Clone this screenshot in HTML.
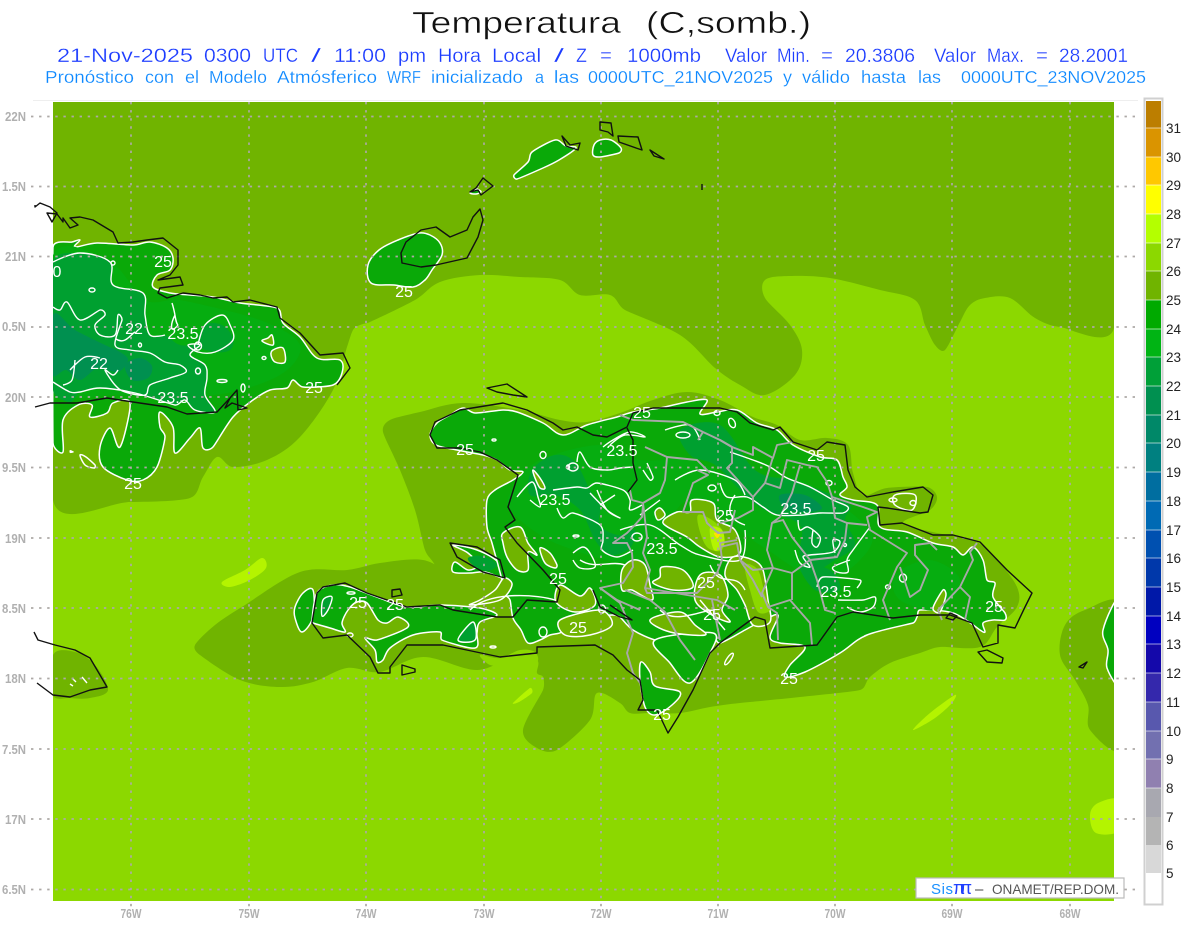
<!DOCTYPE html>
<html><head><meta charset="utf-8"><title>Temperatura</title>
<style>
html,body{margin:0;padding:0;background:#fff}
svg{display:block}
text{font-family:"Liberation Sans",sans-serif;white-space:pre}
.t1 text{font-size:31px;fill:#111;stroke:#fff;stroke-width:.5px}
.t2 text{font-size:19px;fill:#1c3cff;stroke:#fff;stroke-width:.25px}
.t3 text{font-size:17.5px;fill:#0c88ff;stroke:#fff;stroke-width:.2px}
.l{fill:#fff;font-size:16px;text-anchor:middle}
.ax{fill:#b0b0b0;font-size:13px;font-weight:bold}
.cb{fill:#222;font-size:13.5px}
.g{fill:#0aa908;stroke:#fff;stroke-width:1.5;stroke-linejoin:round}
.o{fill:#70b400;stroke:#fff;stroke-width:1.5;stroke-linejoin:round}
.d{fill:#00a030;stroke:none}
.e{fill:#009050;stroke:none}
.m{fill:#06ad10;stroke:none}
.w{fill:none;stroke:#fff;stroke-width:1.4;stroke-linejoin:round}
.c{fill:none;stroke:#111;stroke-width:1.4;stroke-linejoin:round}
.b{fill:none;stroke:#a8a8a8;stroke-width:1.9;stroke-linejoin:round}
</style></head><body>
<svg width="1200" height="927" viewBox="0 0 1200 927" xmlns="http://www.w3.org/2000/svg">
<rect width="1200" height="927" fill="#fff"/>
<line x1="33" x2="1138" y1="100.5" y2="100.5" stroke="#eee"/>
<g class="t1">
<text x="412" y="33" textLength="209" lengthAdjust="spacing">Temperatura</text>
<text x="646" y="33" textLength="165" lengthAdjust="spacing">(C,somb.)</text>
</g>
<g class="t2">
<text x="57" y="62" textLength="136">21-Nov-2025</text><text x="204" y="62" textLength="47">0300</text><text x="263" y="62" textLength="35">UTC</text><text x="311" y="62" textLength="10">/</text><text x="334" y="62" textLength="52">11:00</text><text x="398" y="62" textLength="28">pm</text><text x="438" y="62" textLength="43">Hora</text><text x="492" y="62" textLength="49">Local</text><text x="554" y="62" textLength="10">/</text><text x="576" y="62" textLength="11">Z</text><text x="600" y="62" textLength="12">=</text><text x="627" y="62" textLength="74">1000mb</text><text x="725" y="62" textLength="42">Valor</text><text x="777" y="62" textLength="33">Min.</text><text x="821" y="62" textLength="12">=</text><text x="845" y="62" textLength="70">20.3806</text><text x="934" y="62" textLength="42">Valor</text><text x="987" y="62" textLength="37">Max.</text><text x="1036" y="62" textLength="12">=</text><text x="1059" y="62" textLength="69">28.2001</text>
</g>
<g class="t3">
<text x="45" y="83" textLength="89">Pronóstico</text><text x="145" y="83" textLength="29">con</text><text x="185" y="83" textLength="14">el</text><text x="209" y="83" textLength="58">Modelo</text><text x="277" y="83" textLength="100">Atmósferico</text><text x="387" y="83" textLength="34">WRF</text><text x="431" y="83" textLength="92">inicializado</text><text x="535" y="83" textLength="9">a</text><text x="554" y="83" textLength="25">las</text><text x="588" y="83" textLength="185">0000UTC_21NOV2025</text><text x="783" y="83" textLength="9">y</text><text x="802" y="83" textLength="48">válido</text><text x="861" y="83" textLength="45">hasta</text><text x="918" y="83" textLength="23">las</text><text x="961" y="83" textLength="185">0000UTC_23NOV2025</text>
</g>

<clipPath id="mp"><rect x="53" y="102" width="1061" height="799"/></clipPath>
<g clip-path="url(#mp)">
<rect x="53" y="102" width="1061" height="799" fill="#8cd800"/>
<!-- upper olive -->
<polygon fill="#70b400" points="53,102 1114,102 1114,328 1060,327 1035,318 1010,298 985,298 970,305 960,322 945,350 935,345 925,325 915,300 880,290 830,278 790,276 765,280 765,298 790,325 802,350 795,375 765,395 740,385 715,368 680,335 625,310 610,295 580,295 560,280 520,277 480,275 440,282 415,300 370,322 360,325 353,330 347,347 333,390 300,437 267,460 233,467 217,457 203,477 190,498 130,502 53,500"/>
<!-- Hispaniola halo -->
<polygon fill="#70b400" points="383,432 390,420 420,412 463,403 520,410 560,420 587,422 620,413 653,400 687,392 720,400 753,417 777,425 800,440 827,438 848,445 853,473 863,495 887,488 927,487 937,497 930,510 903,523 937,533 973,540 997,560 1017,587 1017,607 997,627 980,647 940,647 920,653 890,663 870,677 860,690 800,697 740,703 710,707 680,713 650,713 630,713 620,703 597,693 590,720 557,750 537,748 523,730 543,690 543,677 537,673 537,660 515,655 477,670 423,657 380,672 347,668 313,682 280,687 240,680 200,655 195,645 215,625 245,605 300,572 347,570 380,563 423,560 447,575 450,595 435,565 425,550 415,510 400,470"/>
<polygon fill="#8cd800" points="480,655 500,658 520,650 535,652 537,662 520,662 505,665 490,665"/>
<!-- right olive -->
<polygon fill="#70b400" points="1120,605 1085,610 1065,625 1060,655 1075,680 1088,705 1090,730 1120,747"/>
<polygon class="g" points="1120,600 1103,630 1108,650 1107,668 1120,684"/>
<!-- Jamaica olive -->
<polygon fill="#70b400" points="53,655 75,652 95,665 108,690 90,698 70,698 53,695"/>
<path class="w" d="M72 678l4 4M82 677l5 6M70 684l3 2"/>
<!-- lime-yellow patches -->
<polygon fill="#b4f400" points="222,582 245,570 262,558 266,568 250,580 230,587"/>
<polygon fill="#b4f400" points="1120,800 1098,803 1090,815 1096,833 1120,830"/>
<polygon fill="#b4f400" points="913,730 930,713 955,695 952,703 935,718"/>
<polygon fill="#b4f400" points="513,703 530,688 532,693 519,702"/>
<!-- top islands -->
<polygon class="g" points="419,233 430,235 440,243 442,255 432,270 425,280 413,287 394,285 371,283 368,265 379,250 398,240"/>
<polygon class="g" points="532,152 555,140 566,146 576,148 559,160 543,168 517,179 514,175 528,162"/>
<polygon class="g" points="600,140 611,140 621,148 619,153 600,157 593,155 594,145"/>
<polygon class="g" points="470,193 476,189 479,190 481,192 476,194"/>
<!-- Cuba -->
<polygon class="g" points="53,247 72,242 80,240 75,247 97,243 133,245 150,242 167,248 173,258 170,270 157,275 153,287 170,293 190,295 213,297 240,303 277,308 283,323 300,337 317,358 340,360 342,373 333,385 303,387 293,380 287,388 270,390 253,400 233,417 213,447 203,448 200,428 190,438 175,453 173,427 160,412 160,427 165,437 157,467 143,480 127,480 103,467 100,447 110,428 120,447 130,403 113,403 107,413 90,417 92,405 78,405 63,420 63,452 53,443"/>
<polygon class="m" points="53,255 110,262 145,300 180,300 260,320 300,345 280,375 215,395 120,395 53,385"/>
<polygon class="d" points="53,262 80,253 110,262 113,285 143,293 145,315 150,335 165,335 180,345 203,345 190,355 205,365 207,378 205,395 215,408 215,412 195,410 185,400 175,405 135,393 100,388 80,392 70,402 53,390"/>
<polygon class="e" points="53,315 75,330 105,345 120,352 128,360 118,372 98,368 80,380 66,370 53,375"/>
<polygon class="e" points="125,365 140,358 152,366 148,378 132,380"/>
<polygon class="d" points="233,338 222,325 205,325 198,345 215,352 230,350"/>
<polygon class="d" points="85,270 65,285 75,300 100,290 105,275"/>
<path class="w" d="M53 262L80 253 110 262 113 285 143 293 145 315 150 335 165 335"/>
<path class="w" d="M53 307L60 310 67 302 80 320 100 310 105 315 95 325 100 335 115 335 118 315 122 320 115 345 130 350 150 353 165 362 180 365 186 372 170 378 150 385 145 395 125 392 115 385 105 370 113 375 118 370M53 382L70 392 80 392 100 388 135 393 175 405 185 400 195 410 215 412 205 395 207 378 205 365 190 355 200 345 188 345 198 352 215 352 233 340 230 325 222 315 205 325 198 345M70 370L85 357 100 358M75 360L72 380 63 385"/>
<path class="w" d="M172 303C176 315 175 322 178 325M175 315C170 325 170 335 178 325M116 339C125 345 130 335 135 332"/>
<ellipse class="w" cx="92" cy="290" rx="3" ry="2"/><ellipse class="w" cx="113" cy="263" rx="2" ry="2"/><ellipse class="w" cx="198" cy="346" rx="3.5" ry="4"/><ellipse class="w" cx="264" cy="358" rx="2" ry="1.5"/><ellipse class="w" cx="222" cy="381" rx="5" ry="1.5"/><ellipse class="w" cx="243" cy="388" rx="2" ry="4"/><ellipse class="w" cx="198" cy="371" rx="2.5" ry="3"/><ellipse class="w" cx="140" cy="345" rx="1.5" ry="2"/>
<polygon class="o" points="268,338 272,335 273,345 262,341"/><polygon class="o" points="273,350 283,348 285,362 275,362 271,355"/>
<polygon class="o" points="80,455 86,457 95,465 94,468 85,465"/><polygon fill="#fff" points="70,450 74,452 70,453"/>

<!-- Tiburon + islets -->
<polygon class="g" points="295,607 303,593 313,590 313,617 302,632 295,618"/>
<polygon class="g" points="312,620 317,593 333,585 350,587 377,597 407,607 440,605 480,608 497,615 480,622 477,633 475,648 442,640 440,632 413,635 390,648 383,660 377,662 375,650 365,638 377,640 408,627 398,617 387,623 378,620 367,603 357,602 348,610 342,623 345,632 330,628 313,623"/>
<polygon class="d" points="323,600 332,597 328,610 322,616"/><polygon class="w" points="323,600 332,597 328,610 322,616"/>
<polygon class="d" points="458,640 473,622 475,640"/><polygon class="w" points="458,640 473,622 475,640"/>
<polygon class="g" points="641,662 650,672 655,686 680,692 672,705 655,715 645,707 640,680"/>
<!-- Gonave -->
<polygon class="g" points="453,545 477,550 498,562 505,578 485,572 470,573 453,572 455,562 468,570 478,565 468,553"/>

<!-- Main Hispaniola -->
<polygon class="g" points="437,423 450,415 463,408 475,413 503,410 517,412 543,423 563,435 587,425 617,417 633,412 660,408 687,402 707,400 700,414 717,412 737,410 757,423 777,430 793,445 820,457 837,460 843,477 847,487 840,495 853,500 877,505 880,527 907,532 933,543 953,547 963,555 973,547 983,560 987,580 995,583 993,597 1005,613 1005,620 993,620 983,623 985,632 980,630 953,613 920,610 917,617 913,623 867,635 840,653 805,672 785,677 790,665 805,647 780,643 770,637 778,615 760,622 745,630 720,643 712,635 690,640 670,640 655,640 633,630 620,617 613,615 595,617 573,622 562,632 550,635 540,640 528,643 521,630 513,618 510,600 504,593 502,580 492,543 487,527 487,500 495,490 513,480 523,472 510,470 497,460 483,455 457,450 436,445 430,435"/>
<polygon class="g" points="655,640 713,633 710,653 690,683 670,663"/>
<!-- darker land blobs -->
<polygon class="m" points="515,485 540,460 600,445 640,460 690,460 740,480 800,480 870,530 860,560 820,580 760,545 690,500 640,560 560,545 510,510"/>
<polygon class="d" points="532,470 555,455 575,462 590,490 600,505 600,525 618,535 635,530 630,548 610,555 595,540 580,510 555,495 530,495"/>
<polygon class="d" points="680,430 720,425 755,470 790,480 820,490 850,505 845,520 855,545 835,560 815,570 800,555 800,525 765,510 745,495 715,465 690,455"/>
<polygon class="e" points="780,495 805,495 822,508 805,512 785,508"/>
<polygon class="d" points="497,564 482,556 468,558 474,566 488,571"/>
<polygon class="d" points="800,565 830,570 840,590 815,590"/>
<polygon class="m" points="895,575 930,560 960,580 940,610 900,600"/>

<!-- olive holes -->
<polygon class="o" points="533,470 540,478 545,488 540,488 535,478"/>
<polygon class="o" points="503,533 520,527 528,543 537,555 528,552 528,570 517,570 507,557 503,543"/>
<polygon class="o" points="540,548 550,553 557,565 555,568 545,563"/>
<polygon class="o" points="560,585 580,596 590,588 595,605 575,612 556,602"/>
<polygon class="o" points="470,605 500,600 512,585 504,578 495,590 480,600"/>
<polygon class="o" points="633,560 645,565 650,585 652,600 632,590 622,590 622,570"/>
<polygon class="o" points="662,567 683,570 693,587 673,590 653,583 660,577"/>
<polygon class="o" points="692,500 713,503 717,520 735,530 740,553 720,557 700,547 687,537 663,523 677,512 690,512"/>
<polygon fill="#8cd800" points="698,515 712,520 723,532 722,550 708,548 700,532"/>
<polygon fill="#b4f400" points="710,528 722,530 724,545 714,550"/>
<polygon fill="#ffe000" points="714,533 720,534 717,538"/>
<polygon class="o" points="733,557 753,560 763,570 768,600 770,622 753,625 745,605 737,590 725,575"/>
<polygon fill="#8cd800" points="745,565 758,570 765,595 770,610 758,612 750,590"/>
<polygon class="o" points="700,575 720,575 728,595 722,610 730,622 712,615 695,600"/>
<polygon class="o" points="650,620 680,612 695,625 705,635 670,632"/>
<polygon class="o" points="560,620 600,610 612,625 590,635 565,635"/>
<polygon class="o" points="655,512 660,508 665,515 658,520"/>
<polygon class="o" points="933,608 943,590 946,595 940,612"/>
<polygon class="o" points="895,495 915,495 912,510 895,505"/>
<!-- white contours -->
<path class="w" d="M577 462L580 452 590 467 607 470 620 468 633 467M553 490L577 487 587 488 597 483 623 490 630 500 630 510 642 505M590 493L607 510 620 518 607 510 597 490M557 508L563 518 573 513 600 525 603 540 602 550 617 557 633 550M517 497L532 482 538 497 540 507 530 500M573 553L583 547 590 553 595 567 580 568 573 560M603 447L613 440 630 432 645 437 625 435 610 445M647 463L653 477 650 480 643 470M720 483L727 497 747 497 763 507 777 515 803 515 820 513 843 513 848 507 833 500 810 487 787 478 770 467 753 460 730 452M798 520L800 530 808 527 820 537 817 547 812 543 813 530M795 550L800 563 810 567 803 557 810 555 833 552 840 542 833 540 835 553M870 527L853 550 847 560 848 572 837 572 833 567 850 560M817 587L823 577 860 580 857 588M838 600L863 600 875 597 873 607 860 612 847 607M675 480L700 470 735 480 745 495M665 430L690 425 700 440M600 505L615 495M640 515L660 500M620 530L650 525 680 545 700 555 740 560 745 530"/>
<path class="w" d="M580 560C595 570 610 560 625 565M470 610C490 590 540 595 555 600M710 565C720 590 735 570 745 590M700 600L725 630M660 610C675 625 700 610 715 610M745 525C730 520 725 510 735 495"/>
<ellipse class="w" cx="683" cy="435" rx="7" ry="3"/><ellipse class="w" cx="732" cy="423" rx="3" ry="5" transform="rotate(-25 732 423)"/><ellipse class="w" cx="543" cy="455" rx="3" ry="3.5"/><ellipse class="w" cx="717" cy="413" rx="3" ry="2.5"/><ellipse class="w" cx="573" cy="467" rx="5" ry="4"/><ellipse class="w" cx="637" cy="537" rx="5" ry="4"/><ellipse class="w" cx="712" cy="488" rx="4" ry="3"/><ellipse class="w" cx="903" cy="578" rx="3.5" ry="4"/><ellipse class="w" cx="888" cy="587" rx="2.5" ry="2"/><ellipse class="w" cx="893" cy="500" rx="4" ry="2"/><ellipse class="w" cx="913" cy="503" rx="3" ry="2.5"/><ellipse class="w" cx="829" cy="483" rx="3" ry="2.5"/><ellipse class="w" cx="729" cy="659" rx="2" ry="7" transform="rotate(35 729 659)"/><ellipse class="w" cx="845" cy="545" rx="1.5" ry="1.5"/><ellipse class="w" cx="576" cy="536" rx="3" ry="1"/><ellipse class="w" cx="494" cy="440" rx="2" ry="1"/><ellipse class="w" cx="568" cy="467" rx="1.5" ry="2"/><ellipse class="w" cx="493" cy="647" rx="3" ry="1" /><ellipse class="w" cx="351" cy="593" rx="4" ry="1.2"/><ellipse class="w" cx="350" cy="635" rx="3" ry="2"/><ellipse class="w" cx="602" cy="609" rx="3.5" ry="4"/><ellipse class="w" cx="543" cy="632" rx="4" ry="5"/>
</g>
<!-- grid lines -->
<g fill="none" stroke="#ada9a6" stroke-width="1.7" stroke-dasharray="2.4 5.7">
<path d="M131 102V912M249 102V912M366 102V912M484 102V912M601 102V912M718 102V912M835 102V912M952 102V912M1070 102V912"/>
<path d="M31 116.5H1138M31 186.5H1138M31 256.5H1138M31 327H1138M31 397H1138M31 467.5H1138M31 538H1138M31 608H1138M31 678.5H1138M31 749H1138M31 819H1138M31 889.5H1138"/>
</g>
<!-- gray boundaries -->
<g class="b">
<path d="M620 415L633 420 683 422 703 432 720 440 732 447 753 455 753 447 773 458 777 445 793 442"/>
<path d="M645 447L667 457 665 480 660 493 643 503 632 500 630 490"/>
<path d="M667 457L697 460 710 473M698 440L703 432M697 470L708 475 693 483 683 512 703 512 707 523 718 533 730 532 735 510"/>
<path d="M643 505L642 517 633 527 627 533 613 543 627 543 632 553 633 567 623 583 600 588 620 603 633 633 627 653 633 673 640 683"/>
<path d="M643 503L647 537 643 553 650 570 645 588 647 593 697 593 717 573 722 560 720 543 737 540M645 588L717 600 735 610M625 590L650 600 665 612 680 640 695 660"/>
<path d="M720 440L732 447 732 463 727 468 753 497 753 510 738 518 720 523"/>
<path d="M753 497L765 483 770 467 773 457M765 483L780 488 787 460 807 465 817 467 827 482 832 497 863 507 877 512 867 517 870 530 907 553 897 567 883 600 890 620"/>
<path d="M800 465L792 493 780 517 772 523 783 520 792 537 810 560 817 580 825 610 835 613"/>
<path d="M772 523L767 550 773 568 792 573 810 560M773 568L762 593 768 607 790 600 810 623 812 645M792 573L792 600M768 607L777 613 778 640"/>
<path d="M832 497L835 518 847 523 867 525M847 523L845 540 837 557 810 560"/>
<path d="M900 567L910 597 920 590 928 570 915 555 915 545 930 543 937 550"/>
<path d="M977 543L970 552 973 560 960 587 938 610 942 620M960 587L970 597 965 620"/>
<path d="M720 547L737 543 740 560 753 570 773 568M740 560L753 580 762 597M712 600L720 640M600 588L617 600 640 610"/>
</g>
<!-- black coasts -->
<g class="c">
<path d="M35 205L35 207 40 203 50 207 57 213 52 222 47 213 57 214 63 222 63 218 70 228 78 225 70 218 80 217 93 220 113 232 118 243 133 242 147 240 163 238 178 250 178 265 170 275 158 280 180 277 183 285 160 288 158 293 167 298 183 293 200 295 213 298 227 297 233 302 250 300 277 307 280 318 300 333 320 355 343 353 350 368 337 385"/>
<path d="M35 407L50 403 77 403 107 398 133 402 167 407 187 414 217 412 230 398 237 390 238 410 247 408 232 403 225 408 230 398"/>
<path d="M34 632L38 640 55 645 75 650 90 658 100 675 107 687 90 690 70 697 53 695 37 683"/>
<path d="M421 230L436 227 450 237 467 230 473 217 480 209 483 220 478 237 467 258 436 265 421 267 402 263 401 253 406 242Z"/>
<path d="M483 178L493 186 481 195 478 190 470 192 476 188Z"/>
<path d="M562 136L570 145 580 143 578 150 566 146ZM600 122L611 123 613 136 608 132 600 130ZM618 136L638 137 642 150 636 148 619 142ZM650 150L664 159 654 156Z"/>
<path d="M702 184V190"/>
<path d="M487 388L507 384 527 397 513 395 497 392Z"/>
<path d="M435 422L460 410 503 403 527 410 553 423 563 430 577 427 593 435 607 437 627 427 633 413 653 408 687 408 720 408 737 412 750 423 773 430 780 427 793 442 817 450 827 442 845 445 848 470 855 487 867 497 893 492 923 487 933 495 928 512 920 513 887 508 878 507 880 525 902 523 933 535 953 535 980 542 1007 570 1032 593 1025 607 1015 628 998 625 998 643 983 647 972 623 950 615 920 615 893 618 853 612 837 617 817 645 770 648 765 620 755 617 737 630 720 643 710 653 693 690 678 717 668 733 657 710 638 710 643 700 640 680 627 670 613 655 595 645 537 647 537 653 500 657 443 645 407 645 390 667 390 673 378 673 370 657 347 635 323 638 312 623 317 593 323 587 345 583 367 593 407 607 440 605 453 610 497 617 513 617 527 600 557 602 560 590 543 570 517 543 505 527 515 520 508 507 518 475 497 460 480 452 460 448 437 448 430 435Z"/>
<path d="M627 428L633 440 633 463 637 480 628 492"/>
<path d="M450 543L477 547 500 560 505 578 483 572 457 557Z"/>
<path d="M593 590L600 607 620 617 632 620 610 605"/>
<path d="M978 652L987 650 1003 658 1002 663 987 662Z"/>
<path d="M392 590L400 589 402 595 392 597ZM402 675L415 672 415 669 402 665Z"/>
<path d="M950 613L957 616 953 620 946 618ZM1079 667L1087 662 1083 668Z"/>
</g>
<!-- contour labels -->
<g class="l">
<text x="163" y="267">25</text><text x="134" y="334">22</text><text x="183" y="339">23.5</text><text x="99" y="369">22</text><text x="173" y="403">23.5</text><text x="314" y="393">25</text><text x="133" y="489">25</text><text x="404" y="297">25</text><text x="642" y="418">25</text><text x="465" y="455">25</text><text x="622" y="456">23.5</text><text x="816" y="461">25</text><text x="555" y="505">23.5</text><text x="796" y="514">23.5</text><text x="725" y="521">25</text><text x="662" y="554">23.5</text><text x="558" y="584">25</text><text x="706" y="588">25</text><text x="358" y="608">25</text><text x="395" y="610">25</text><text x="836" y="597">23.5</text><text x="994" y="612">25</text><text x="712" y="620">25</text><text x="578" y="633">25</text><text x="789" y="684">25</text><text x="662" y="720">25</text><text x="57" y="277">0</text>
</g>
<!-- axis labels -->
<g class="ax" text-anchor="end">
<text x="26" y="121">22N</text><text x="26" y="191">1.5N</text><text x="26" y="261">21N</text><text x="26" y="331">0.5N</text><text x="26" y="402">20N</text><text x="26" y="472">9.5N</text><text x="26" y="543">19N</text><text x="26" y="613">8.5N</text><text x="26" y="683">18N</text><text x="26" y="754">7.5N</text><text x="26" y="824">17N</text><text x="26" y="894">6.5N</text>
</g>
<g class="ax" text-anchor="middle">
<text x="131" y="918">76W</text><text x="249" y="918">75W</text><text x="366" y="918">74W</text><text x="484" y="918">73W</text><text x="601" y="918">72W</text><text x="718" y="918">71W</text><text x="835" y="918">70W</text><text x="952" y="918">69W</text><text x="1070" y="918">68W</text>
</g>
<!-- legend box -->
<rect x="916" y="878" width="208" height="20" fill="#fff" stroke="#bbb" stroke-width="1.2"/>
<text x="931" y="894" font-size="15" fill="#1a90ff" textLength="22">Sis</text>
<text x="953" y="894" font-size="18" fill="#2040ff" textLength="19">ππ</text>
<text x="975" y="894" font-size="15" fill="#444">–</text>
<text x="992" y="894" font-size="14" fill="#555" textLength="127" lengthAdjust="spacingAndGlyphs">ONAMET/REP.DOM.</text>
<!-- colorbar -->
<rect x="1144.5" y="98.5" width="18" height="806" fill="#fff" stroke="#d0d0d0" stroke-width="2"/>
<g>
<rect x="1146" y="101" width="15" height="27" fill="#bc7e00"/>
<rect x="1146" y="128" width="15" height="29" fill="#da9400"/>
<rect x="1146" y="157" width="15" height="28" fill="#ffc800"/>
<rect x="1146" y="185" width="15" height="29" fill="#ffff00"/>
<rect x="1146" y="214" width="15" height="29" fill="#b4ff00"/>
<rect x="1146" y="243" width="15" height="28" fill="#8cd800"/>
<rect x="1146" y="271" width="15" height="29" fill="#70b400"/>
<rect x="1146" y="300" width="15" height="29" fill="#00aa00"/>
<rect x="1146" y="329" width="15" height="28" fill="#00b414"/>
<rect x="1146" y="357" width="15" height="29" fill="#00a038"/>
<rect x="1146" y="386" width="15" height="29" fill="#009050"/>
<rect x="1146" y="415" width="15" height="28" fill="#008868"/>
<rect x="1146" y="443" width="15" height="29" fill="#008080"/>
<rect x="1146" y="472" width="15" height="29" fill="#006ea0"/>
<rect x="1146" y="501" width="15" height="29" fill="#006ab4"/>
<rect x="1146" y="530" width="15" height="28" fill="#0050b0"/>
<rect x="1146" y="558" width="15" height="29" fill="#0038aa"/>
<rect x="1146" y="587" width="15" height="29" fill="#0018a8"/>
<rect x="1146" y="616" width="15" height="28" fill="#0000c0"/>
<rect x="1146" y="644" width="15" height="29" fill="#1408aa"/>
<rect x="1146" y="673" width="15" height="29" fill="#3428ac"/>
<rect x="1146" y="702" width="15" height="29" fill="#5858ae"/>
<rect x="1146" y="731" width="15" height="28" fill="#7270b0"/>
<rect x="1146" y="759" width="15" height="29" fill="#9080b0"/>
<rect x="1146" y="788" width="15" height="29" fill="#a8a8b0"/>
<rect x="1146" y="817" width="15" height="28" fill="#b4b4b4"/>
<rect x="1146" y="845" width="15" height="28" fill="#d8d8d8"/>
<rect x="1146" y="873" width="15" height="30" fill="#ffffff"/>
<path stroke="#fff" stroke-opacity=".6" fill="none" d="M1146 128h15M1146 157h15M1146 185h15M1146 214h15M1146 243h15M1146 271h15M1146 300h15M1146 329h15M1146 357h15M1146 386h15M1146 415h15M1146 443h15M1146 472h15M1146 501h15M1146 530h15M1146 558h15M1146 587h15M1146 616h15M1146 644h15M1146 673h15M1146 702h15M1146 731h15M1146 759h15M1146 788h15"/>
</g>
<g class="cb">
<text x="1166" y="133">31</text><text x="1166" y="162">30</text><text x="1166" y="190">29</text><text x="1166" y="219">28</text><text x="1166" y="248">27</text><text x="1166" y="276">26</text><text x="1166" y="305">25</text><text x="1166" y="334">24</text><text x="1166" y="362">23</text><text x="1166" y="391">22</text><text x="1166" y="420">21</text><text x="1166" y="448">20</text><text x="1166" y="477">19</text><text x="1166" y="506">18</text><text x="1166" y="535">17</text><text x="1166" y="563">16</text><text x="1166" y="592">15</text><text x="1166" y="621">14</text><text x="1166" y="649">13</text><text x="1166" y="678">12</text><text x="1166" y="707">11</text><text x="1166" y="736">10</text><text x="1166" y="764">9</text><text x="1166" y="793">8</text><text x="1166" y="822">7</text><text x="1166" y="850">6</text><text x="1166" y="878">5</text>
</g>
</svg>
<script>
(function(){
var NS="http://www.w3.org/2000/svg";
[].slice.call(document.querySelectorAll(".t1 text,.t2 text,.t3 text")).forEach(function(t){t.setAttribute("lengthAdjust","spacingAndGlyphs")});
[].slice.call(document.querySelectorAll(".ax text")).forEach(function(t){
  var n=t.textContent.length;
  t.setAttribute("textLength",n>3?24:21);
  t.setAttribute("lengthAdjust","spacingAndGlyphs");
});
function tan(a,b,c){
  var dx=(c[0]-a[0])/6,dy=(c[1]-a[1])/6,l=Math.hypot(dx,dy),s=Math.hypot(c[0]-b[0],c[1]-b[1])*.4,r=Math.hypot(b[0]-a[0],b[1]-a[1])*.4,m=Math.min(s,r);
  if(l>m&&l>0){dx*=m/l;dy*=m/l}
  return [dx,dy];
}
function smooth(p,closed){
  var n=p.length,d="M"+p[0][0]+" "+p[0][1],end=closed?n:n-1;
  function at(i){return closed?p[(i+n)%n]:p[Math.max(0,Math.min(n-1,i))]}
  for(var i=0;i<end;i++){
    var a=at(i-1),b=at(i),c=at(i+1),e=at(i+2),t1=tan(a,b,c),t2=tan(b,c,e);
    d+="C"+(b[0]+t1[0]).toFixed(1)+" "+(b[1]+t1[1]).toFixed(1)+" "+(c[0]-t2[0]).toFixed(1)+" "+(c[1]-t2[1]).toFixed(1)+" "+c[0]+" "+c[1];
  }
  return d+(closed?"Z":"");
}
function nums(s){var m=s.match(/-?[\d.]+/g)||[],o=[];for(var i=0;i+1<m.length;i+=2)o.push([+m[i],+m[i+1]]);return o}
var ps=[].slice.call(document.querySelectorAll("svg polygon"));
ps.forEach(function(g){
  var p=nums(g.getAttribute("points"));
  var q=document.createElementNS(NS,"path");
  for(var i=0;i<g.attributes.length;i++){var at=g.attributes[i];if(at.name!="points")q.setAttribute(at.name,at.value)}
  q.setAttribute("d",smooth(p,true));
  g.parentNode.replaceChild(q,g);
});
[].slice.call(document.querySelectorAll("svg path.w")).forEach(function(w){
  var d=w.getAttribute("d");
  if(!/^M[\d\s.LM-]+$/.test(d))return;
  var out="";
  d.split("M").forEach(function(s){if(s.trim()){out+=smooth(nums(s),false)}});
  w.setAttribute("d",out);
});
})();
</script>
</body></html>
